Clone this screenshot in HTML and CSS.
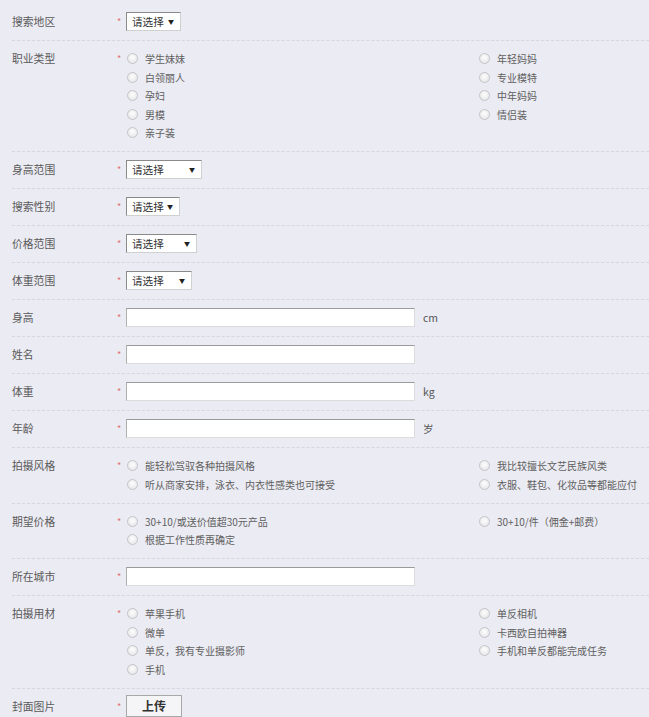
FILE: index.html
```html
<!DOCTYPE html>
<html lang="zh">
<head>
  <meta charset="UTF-8">
  <title>模特报名</title>
  <link rel="stylesheet" href="styles.css">
</head>
<body>
  <div class="form">
    <div class="row">
      <div class="label">搜索地区</div><div class="star">*</div>
      <div class="field"><span class="select w55"><select><option>请选择</option></select></span></div>
    </div>
    <div class="row">
      <div class="label">职业类型</div><div class="star">*</div>
      <div class="field options">
        <div class="col">
          <label><input type="radio" name="job">学生妹妹</label>
          <label><input type="radio" name="job">白领丽人</label>
          <label><input type="radio" name="job">孕妇</label>
          <label><input type="radio" name="job">男模</label>
          <label><input type="radio" name="job">亲子装</label>
        </div>
        <div class="col">
          <label><input type="radio" name="job">年轻妈妈</label>
          <label><input type="radio" name="job">专业模特</label>
          <label><input type="radio" name="job">中年妈妈</label>
          <label><input type="radio" name="job">情侣装</label>
        </div>
      </div>
    </div>
    <div class="row">
      <div class="label">身高范围</div><div class="star">*</div>
      <div class="field"><span class="select w76"><select><option>请选择</option></select></span></div>
    </div>
    <div class="row">
      <div class="label">搜索性别</div><div class="star">*</div>
      <div class="field"><span class="select w54"><select><option>请选择</option></select></span></div>
    </div>
    <div class="row">
      <div class="label">价格范围</div><div class="star">*</div>
      <div class="field"><span class="select w71"><select><option>请选择</option></select></span></div>
    </div>
    <div class="row">
      <div class="label">体重范围</div><div class="star">*</div>
      <div class="field"><span class="select w66"><select><option>请选择</option></select></span></div>
    </div>
    <div class="row">
      <div class="label">身高</div><div class="star">*</div>
      <div class="field"><input type="text" class="text"><span class="unit">cm</span></div>
    </div>
    <div class="row">
      <div class="label">姓名</div><div class="star">*</div>
      <div class="field"><input type="text" class="text"></div>
    </div>
    <div class="row">
      <div class="label">体重</div><div class="star">*</div>
      <div class="field"><input type="text" class="text"><span class="unit">kg</span></div>
    </div>
    <div class="row">
      <div class="label">年龄</div><div class="star">*</div>
      <div class="field"><input type="text" class="text"><span class="unit">岁</span></div>
    </div>
    <div class="row">
      <div class="label">拍摄风格</div><div class="star">*</div>
      <div class="field options">
        <div class="col">
          <label><input type="radio" name="style">能轻松驾驭各种拍摄风格</label>
          <label><input type="radio" name="style">听从商家安排，泳衣、内衣性感类也可接受</label>
        </div>
        <div class="col">
          <label><input type="radio" name="style">我比较擅长文艺民族风类</label>
          <label><input type="radio" name="style">衣服、鞋包、化妆品等都能应付</label>
        </div>
      </div>
    </div>
    <div class="row">
      <div class="label">期望价格</div><div class="star">*</div>
      <div class="field options">
        <div class="col">
          <label><input type="radio" name="price">30+10/或送价值超30元产品</label>
          <label><input type="radio" name="price">根据工作性质再确定</label>
        </div>
        <div class="col">
          <label><input type="radio" name="price">30+10/件（佣金+邮费）</label>
        </div>
      </div>
    </div>
    <div class="row">
      <div class="label">所在城市</div><div class="star">*</div>
      <div class="field"><input type="text" class="text"></div>
    </div>
    <div class="row">
      <div class="label">拍摄用材</div><div class="star">*</div>
      <div class="field options">
        <div class="col">
          <label><input type="radio" name="gear">苹果手机</label>
          <label><input type="radio" name="gear">微单</label>
          <label><input type="radio" name="gear">单反，我有专业摄影师</label>
          <label><input type="radio" name="gear">手机</label>
        </div>
        <div class="col">
          <label><input type="radio" name="gear">单反相机</label>
          <label><input type="radio" name="gear">卡西欧自拍神器</label>
          <label><input type="radio" name="gear">手机和单反都能完成任务</label>
        </div>
      </div>
    </div>
    <div class="row">
      <div class="label">封面图片</div><div class="star">*</div>
      <div class="field"><button class="upload">上传</button></div>
    </div>
  </div>
</body>
</html>
```

FILE: styles.css
```css
body {
  margin: 0;
  background: #ebebf3;
  font-family: 'Noto Sans CJK SC', 'Noto Sans', sans-serif;
  font-size: 11px;
  color: #5a5a5a;
  overflow: hidden;
}

.form {
  padding: 4px 0 0 12px;
}

.row {
  display: flex;
  align-items: flex-start;
  padding: 8px 0 9px;
  border-bottom: 1px dashed #d5d6de;
}

.label {
  width: 105px;
  line-height: 19px;
  flex-shrink: 0;
  font-size: 10.8px;
}

.star {
  width: 9px;
  line-height: 19px;
  color: #e07070;
  font-size: 9px;
  flex-shrink: 0;
}

.field {
  display: flex;
  align-items: center;
  min-height: 19px;
}

/* selects */
.select {
  position: relative;
  display: inline-block;
  height: 19px;
}

.select select {
  appearance: none;
  -webkit-appearance: none;
  width: 100%;
  height: 19px;
  margin: 0;
  padding: 0 0 0 5px;
  font: inherit;
  font-size: 10.6px;
  color: #333;
  background: #fff;
  border: 1px solid #d0d0d0;
  border-top-color: #8a8a8a;
  border-left-color: #8a8a8a;
  border-radius: 0;
}

.select::after {
  content: "▼";
  position: absolute;
  right: 7px;
  top: 5px;
  font-size: 6px;
  color: #222;
  pointer-events: none;
}

.w54 { width: 54px; }
.w55 { width: 55px; }
.w66 { width: 66px; }
.w71 { width: 71px; }
.w76 { width: 76px; }

/* text inputs */
.text {
  box-sizing: border-box;
  width: 289px;
  height: 19px;
  margin: 0;
  padding: 0 4px;
  background: #fff;
  border: 1px solid #dcdcdc;
  border-top-color: #9a9a9a;
  border-left-color: #b0b0b0;
  border-radius: 0;
}

.unit {
  margin-left: 8px;
  color: #555;
  font-size: 10.5px;
}

/* radio groups */
.options {
  display: flex;
  align-items: flex-start;
}

.options .col {
  display: flex;
  flex-direction: column;
}

.options .col:first-child {
  width: 352px;
}

.options label {
  display: flex;
  align-items: center;
  height: 18.5px;
  font-size: 10px;
  color: #5f5f5f;
  white-space: nowrap;
}

.options label:first-child {
  height: 19px;
}

.options input[type="radio"] {
  appearance: none;
  -webkit-appearance: none;
  width: 11px;
  height: 11px;
  margin: 0 7px 0 1px;
  border: 1px solid #c4c4c8;
  border-radius: 50%;
  background: radial-gradient(circle at 50% 40%, #fdfdfd, #e2e2e6);
}

.upload {
  height: 22px;
  width: 56px;
  margin-top: -2px;
  padding: 0;
  font: inherit;
  font-size: 12px;
  font-weight: bold;
  color: #333;
  background: #f5f5f7;
  border: 1px solid #a8a8a8;
  border-radius: 0;
}
```
